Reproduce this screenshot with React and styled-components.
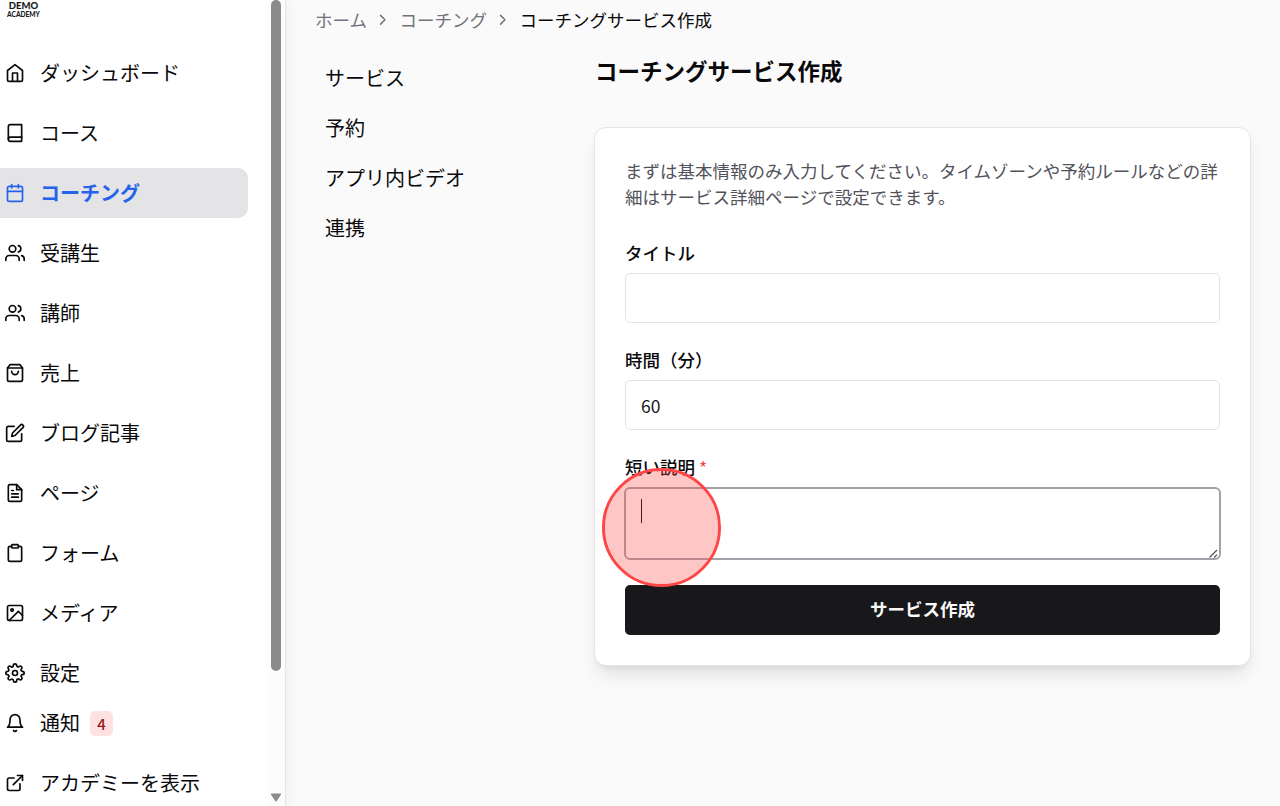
import React from "react";
import styled, { createGlobalStyle } from "styled-components";
import { FiHome, FiBook, FiCalendar, FiUsers, FiShoppingBag, FiEdit, FiFileText, FiClipboard, FiImage, FiSettings, FiBell, FiExternalLink, FiChevronRight } from "react-icons/fi";

const Global = createGlobalStyle`
  *, *::before, *::after { box-sizing: border-box; }
  body { margin: 0; overflow: hidden; font-family: "Noto Sans CJK JP", sans-serif; color: #09090b; background: #fafafa; }
`;

const Shell = styled.div`
  display: flex;
  width: 1280px;
  height: 806px;
  overflow: hidden;
`;

const Sidebar = styled.aside`
  display: flex;
  flex: none;
  width: 286px;
  background: #fff;
  border-right: 1px solid #e4e4e7;
  box-shadow: 0 0 18px rgba(0, 0, 0, 0.06);
  z-index: 1;
`;

const SidebarBody = styled.div`
  flex: none;
  width: 268px;
  padding-right: 20px;
`;

const Logo = styled.div`
  display: flex;
  flex-direction: column;
  align-items: center;
  width: 47px;
  height: 48px;
  padding-top: 1px;
  color: #18181b;
  font-family: Lato, sans-serif;
  font-weight: 900;
`;

const LogoTop = styled.span`
  font-size: 9.5px;
  line-height: 10px;
`;

const LogoBottom = styled.span`
  font-size: 6.6px;
  line-height: 7px;
`;

const Nav = styled.nav`
  display: flex;
  flex-direction: column;
  gap: 10px;
`;

const NavItem = styled.a`
  display: flex;
  align-items: center;
  gap: 15px;
  height: 50px;
  padding-left: 5px;
  border-radius: 0 10px 10px 0;
  font-size: 20px;
  line-height: 30px;
  white-space: nowrap;
  color: ${(p) => (p.$active ? "#2563eb" : "#09090b")};
  background: ${(p) => (p.$active ? "#e4e4e7" : "transparent")};
  font-weight: ${(p) => (p.$active ? 700 : 400)};
  margin-top: ${(p) => (p.$tight ? "-10px" : "0")};
`;

const Count = styled.span`
  display: flex;
  align-items: center;
  justify-content: center;
  width: 23px;
  height: 25px;
  margin-left: -5px;
  padding-top: 1px;
  border-radius: 5px;
  background: #fee2e2;
  color: #991b1b;
  font-size: 15px;
  font-weight: 500;
  line-height: 20px;
`;

const ScrollTrack = styled.div`
  display: flex;
  flex-direction: column;
  justify-content: space-between;
  align-items: center;
  width: 17px;
  padding: 0 1px 4px 0;
  background: #fcfcfc;
`;

const ScrollThumb = styled.div`
  width: 10px;
  height: 671px;
  border-radius: 5px;
  background: #8b8b8b;
`;

const Main = styled.main`
  flex: 1;
  padding-left: 29px;
`;

const Breadcrumb = styled.nav`
  display: flex;
  align-items: center;
  gap: 7.5px;
  height: 41px;
  padding-bottom: 2px;
  font-size: 17.5px;
  color: #71717a;
`;

const Crumb = styled.span`
  color: ${(p) => (p.$current ? "#09090b" : "#71717a")};
`;

const Columns = styled.div`
  display: flex;
`;

const SubNav = styled.nav`
  display: flex;
  flex-direction: column;
  width: 279px;
  padding: 12px 0 0 10px;
`;

const SubItem = styled.a`
  height: 50px;
  font-size: 20px;
  line-height: 50px;
`;

const Content = styled.section`
  width: 657px;
`;

const Title = styled.h1`
  margin: 0;
  height: 86px;
  padding-left: 1px;
  font-size: 22.5px;
  font-weight: 700;
  line-height: 58px;
`;

const Card = styled.form`
  display: flex;
  flex-direction: column;
  height: 539px;
  padding: 30px;
  border: 1px solid #e4e4e7;
  border-radius: 12px;
  background: #fff;
  box-shadow: 0 12px 19px -4px rgba(0, 0, 0, 0.1), 0 5px 8px -5px rgba(0, 0, 0, 0.1);
`;

const Intro = styled.p`
  margin: 0 0 30px;
  color: #52525b;
  font-size: 17.5px;
  line-height: 26.25px;
`;

const Field = styled.div`
  position: relative;
  display: flex;
  flex-direction: column;
  gap: 7px;
  margin-bottom: 25px;
`;

const Label = styled.label`
  height: 25px;
  font-size: 17.5px;
  font-weight: 500;
  line-height: 23px;
`;

const Star = styled.span`
  position: relative;
  top: 1px;
  color: #ef4444;
  font-weight: 400;
`;

const Input = styled.input`
  display: block;
  width: 100%;
  height: 50px;
  padding: 2px 15px 0;
  border: 1px solid #e4e4e7;
  border-radius: 5px;
  outline: none;
  background: #fff;
  font: 400 17.5px "Noto Sans CJK JP", sans-serif;
  color: #18181b;
`;

const TextArea = styled.div`
  display: flex;
  justify-content: space-between;
  align-items: flex-end;
  height: 73px;
  margin: 0 -1px;
  padding: 0 1px 0 15px;
  border: 2px solid #a1a1aa;
  border-radius: 6px;
`;

const Caret = styled.span`
  align-self: flex-start;
  width: 1px;
  height: 24px;
  margin-top: 10px;
  background: #000;
`;

const ClickMarker = styled.span`
  position: absolute;
  left: -23.5px;
  top: 13px;
  width: 119.5px;
  height: 119.5px;
  border: 3px solid #ff4646;
  border-radius: 50%;
  background: rgba(255, 70, 70, 0.31);
  background-clip: padding-box;
  z-index: 2;
`;

const Submit = styled.button`
  height: 50px;
  flex: none;
  padding: 0 0 2px;
  border: 0;
  border-radius: 5px;
  background: #18181b;
  color: #fafafa;
  font: 600 17.5px "Noto Sans CJK JP", sans-serif;
`;

const items = [
  [FiHome, "ダッシュボード"],
  [FiBook, "コース"],
  [FiCalendar, "コーチング", { $active: true }],
  [FiUsers, "受講生"],
  [FiUsers, "講師"],
  [FiShoppingBag, "売上"],
  [FiEdit, "ブログ記事"],
  [FiFileText, "ページ"],
  [FiClipboard, "フォーム"],
  [FiImage, "メディア"],
  [FiSettings, "設定"],
  [FiBell, "通知", { $tight: true }, "4"],
  [FiExternalLink, "アカデミーを表示"],
];

export default function App() {
  return (
    <Shell>
      <Global />
      <Sidebar>
        <SidebarBody>
          <Logo>
            <LogoTop>DEMO</LogoTop>
            <LogoBottom>ACADEMY</LogoBottom>
          </Logo>
          <Nav>
            {items.map(([Icon, label, state, count]) => (
              <NavItem key={label} {...state}>
                <Icon size={20} />
                {label}
                {count && <Count>{count}</Count>}
              </NavItem>
            ))}
          </Nav>
        </SidebarBody>
        <ScrollTrack>
          <ScrollThumb />
          <svg width="12" height="9" viewBox="0 0 12 9"><path d="M1.5 0.5h9q1 .3.4 1.2L6.8 8q-.8.9-1.6 0L1.1 1.7Q.5.8 1.5.5z" fill="#8b8b8b" /></svg>
        </ScrollTrack>
      </Sidebar>
      <Main>
        <Breadcrumb>
          <Crumb>ホーム</Crumb>
          <FiChevronRight size={17.5} />
          <Crumb>コーチング</Crumb>
          <FiChevronRight size={17.5} />
          <Crumb $current>コーチングサービス作成</Crumb>
        </Breadcrumb>
        <Columns>
          <SubNav>
            <SubItem>サービス</SubItem>
            <SubItem>予約</SubItem>
            <SubItem>アプリ内ビデオ</SubItem>
            <SubItem>連携</SubItem>
          </SubNav>
          <Content>
            <Title>コーチングサービス作成</Title>
            <Card>
              <Intro>まずは基本情報のみ入力してください。タイムゾーンや予約ルールなどの詳細はサービス詳細ページで設定できます。</Intro>
              <Field>
                <Label>タイトル</Label>
                <Input />
              </Field>
              <Field>
                <Label>時間（分）</Label>
                <Input defaultValue="60" />
              </Field>
              <Field>
                <Label>短い説明 <Star>*</Star></Label>
                <TextArea>
                  <Caret />
                  <svg width="9" height="9" viewBox="0 0 9 9" stroke="#52525b" strokeWidth="1.2" fill="none"><path d="M0.5 8.5L8 1M5 8.5L8 5.8" /></svg>
                </TextArea>
                <ClickMarker />
              </Field>
              <Submit type="button">サービス作成</Submit>
            </Card>
          </Content>
        </Columns>
      </Main>
    </Shell>
  );
}
